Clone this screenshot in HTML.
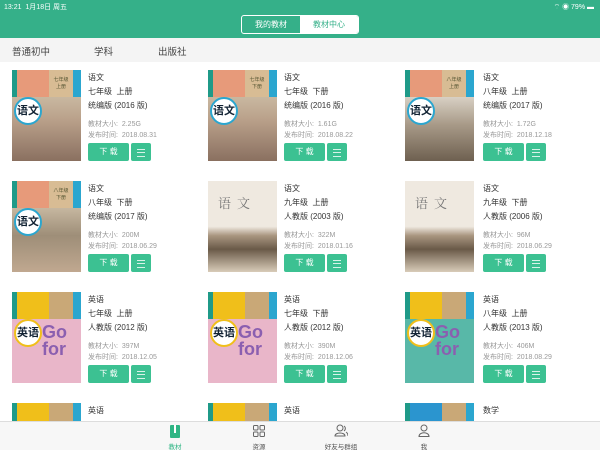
<!DOCTYPE html>
<html style="width:600px;height:450px;overflow:hidden"><head><meta charset="utf-8"><style>
*{margin:0;padding:0;box-sizing:border-box}
body{width:600px;height:450px;overflow:hidden;position:relative;background:#fff;font-family:"Liberation Sans","Noto Sans CJK SC",sans-serif;color:#333}
.hdr{position:absolute;left:0;top:0;width:600px;height:38px;background:#35b089}
.sb{position:absolute;top:2px;font-size:7px;color:#fff}
.seg{position:absolute;left:241px;top:15px;width:118px;height:19px;border:1px solid #fff;border-radius:3px;display:flex;font-size:8px;overflow:hidden}
.seg div{flex:1;text-align:center;line-height:17px;color:#fff}
.seg .on{background:#fff;color:#35b089}
.flt{position:absolute;top:38px;left:0;width:600px;height:24px;background:#f4f4f4;font-size:9.5px;color:#444}
.flt span{position:absolute;top:6px}
.cv{position:absolute;width:69px;height:91px;overflow:hidden}
.t{position:absolute;font-size:8px;color:#333;line-height:10px;white-space:nowrap}
.s{position:absolute;font-size:7px;color:#999;line-height:10px;white-space:nowrap}
.dl{position:absolute;width:41px;height:18px;background:#3cc192;color:#fff;font-size:8px;text-align:center;line-height:18px;border-radius:2px}
.ls{position:absolute;width:20px;height:18px;background:#3cc192;border-radius:2px}
.ls:after{content:"";position:absolute;left:6px;top:6px;width:8px;height:6px;border-top:1px solid #d8f2e8;border-bottom:1px solid #d8f2e8}
.ls:before{content:"";position:absolute;left:6px;top:9px;width:8px;height:1px;background:#d8f2e8}
.tab{position:absolute;left:0;top:421px;width:600px;height:29px;background:#f7f7f7;border-top:1px solid #ddd;z-index:5}
.ti{position:absolute;top:19px;font-size:6.5px;color:#555;transform:translateX(-50%)}
.ca{background:linear-gradient(#0000 0 27px,#c9b8a0 27px,#b9a08a 55%,#8a7060)}
.ca .a1{position:absolute;left:0;top:0;width:5px;height:27px;background:#1f9a88}
.ca .a2{position:absolute;left:5px;top:0;width:32px;height:27px;background:#e79a7a}
.ca .a3{position:absolute;left:37px;top:0;width:24px;height:27px;background:#d8bc94;font-size:5px;text-align:center;padding-top:6px;color:#553}
.ca .a4{position:absolute;left:61px;top:0;width:8px;height:27px;background:#2ba6cf}
.circ{position:absolute;left:2px;top:27px;width:28px;height:28px;border-radius:50%;background:#fff;border:2px solid #2ba6cf;font-size:11px;font-weight:bold;text-align:center;line-height:24px;color:#123}
.cb{background:linear-gradient(#efe9e0 0 50%,#a99680 60%,#6a5a48 75%,#d8cbb8 100%)}
.cb .b1{position:absolute;left:10px;top:12px;font-size:13px;color:#777;letter-spacing:6px;font-family:"Noto Serif CJK SC",serif}
.cc{background:#e9b6c9}
.cc .a1{background:#1f9a88}.cc .a2{background:#f0bf1a}.cc .a3{background:#c9a877}.cc .a4{background:#2ba6cf}
.cc .a1,.cc .a2,.cc .a3,.cc .a4{position:absolute;top:0;height:27px}
.cd .a2{background:#2b95cf}
.go{position:absolute;left:30px;top:32px;font-size:18px;font-weight:bold;color:#8b5fb0;line-height:17px}
.r4{height:18px}
</style></head><body>
<div class="hdr">
<div class="sb" style="left:4px">13:21&nbsp; 1月18日 周五</div>
<div class="sb" style="right:6px">⌔ ◉ 79% ▬</div>
<div class="seg"><div>我的教材</div><div class="on">教材中心</div></div>
</div>
<div class="flt"><span style="left:12px">普通初中</span><span style="left:94px">学科</span><span style="left:158px">出版社</span></div>

<div class="cv ca" style="left:12px;top:70px"><div class="a1"></div><div class="a2"></div><div class="a3">七年级<br>上册</div><div class="a4"></div><div class="circ">语文</div></div>
<div class="cv ca" style="left:208px;top:70px"><div class="a1"></div><div class="a2"></div><div class="a3">七年级<br>下册</div><div class="a4"></div><div class="circ">语文</div></div>
<div class="cv ca" style="left:405px;top:70px;background:linear-gradient(#0000 0 27px,#d8d0c4 27px,#a89a88 60%,#6e6050)"><div class="a1"></div><div class="a2"></div><div class="a3">八年级<br>上册</div><div class="a4"></div><div class="circ">语文</div></div>
<div class="cv ca" style="left:12px;top:181px;background:linear-gradient(#0000 0 27px,#c6b7a0 27px,#9e8e78 60%,#c0a890)"><div class="a1"></div><div class="a2"></div><div class="a3">八年级<br>下册</div><div class="a4"></div><div class="circ">语文</div></div>
<div class="cv cb" style="left:208px;top:181px"><div class="b1">语文</div></div>
<div class="cv cb" style="left:405px;top:181px"><div class="b1">语文</div></div>
<div class="cv cc" style="left:12px;top:292px"><div class="a1" style="left:0;width:5px"></div><div class="a2" style="left:5px;width:32px"></div><div class="a3" style="left:37px;width:24px"></div><div class="a4" style="left:61px;width:8px"></div><div class="circ" style="border-color:#f0bf1a">英语</div><div class="go">Go<br>for</div></div>
<div class="cv cc" style="left:208px;top:292px"><div class="a1" style="left:0;width:5px"></div><div class="a2" style="left:5px;width:32px"></div><div class="a3" style="left:37px;width:24px"></div><div class="a4" style="left:61px;width:8px"></div><div class="circ" style="border-color:#f0bf1a">英语</div><div class="go">Go<br>for</div></div>
<div class="cv cc" style="left:405px;top:292px;background:#58b8a8"><div class="a1" style="left:0;width:5px"></div><div class="a2" style="left:5px;width:32px"></div><div class="a3" style="left:37px;width:24px"></div><div class="a4" style="left:61px;width:8px"></div><div class="circ" style="border-color:#f0bf1a">英语</div><div class="go">Go<br>for</div></div>
<div class="cv cc r4" style="left:12px;top:403px"><div class="a1" style="left:0;width:5px"></div><div class="a2" style="left:5px;width:32px"></div><div class="a3" style="left:37px;width:24px"></div><div class="a4" style="left:61px;width:8px"></div></div>
<div class="cv cc r4" style="left:208px;top:403px"><div class="a1" style="left:0;width:5px"></div><div class="a2" style="left:5px;width:32px"></div><div class="a3" style="left:37px;width:24px"></div><div class="a4" style="left:61px;width:8px"></div></div>
<div class="cv cc cd r4" style="left:405px;top:403px"><div class="a1" style="left:0;width:5px"></div><div class="a2" style="left:5px;width:32px"></div><div class="a3" style="left:37px;width:24px"></div><div class="a4" style="left:61px;width:8px"></div></div>

<div class="t" style="left:88px;top:73px">语文</div><div class="t" style="left:88px;top:87px">七年级&nbsp; 上册</div><div class="t" style="left:88px;top:101px">统编版 (2016 版)</div>
<div class="s" style="left:88px;top:120px">教材大小:&nbsp; 2.25G</div><div class="s" style="left:88px;top:131px">发布时间:&nbsp; 2018.08.31</div>
<div class="dl" style="left:88px;top:143px">下 载</div><div class="ls" style="left:131px;top:143px"></div>
<div class="t" style="left:284px;top:73px">语文</div><div class="t" style="left:284px;top:87px">七年级&nbsp; 下册</div><div class="t" style="left:284px;top:101px">统编版 (2016 版)</div>
<div class="s" style="left:284px;top:120px">教材大小:&nbsp; 1.61G</div><div class="s" style="left:284px;top:131px">发布时间:&nbsp; 2018.08.22</div>
<div class="dl" style="left:284px;top:143px">下 载</div><div class="ls" style="left:327px;top:143px"></div>
<div class="t" style="left:483px;top:73px">语文</div><div class="t" style="left:483px;top:87px">八年级&nbsp; 上册</div><div class="t" style="left:483px;top:101px">统编版 (2017 版)</div>
<div class="s" style="left:483px;top:120px">教材大小:&nbsp; 1.72G</div><div class="s" style="left:483px;top:131px">发布时间:&nbsp; 2018.12.18</div>
<div class="dl" style="left:483px;top:143px">下 载</div><div class="ls" style="left:526px;top:143px"></div>
<div class="t" style="left:88px;top:184px">语文</div><div class="t" style="left:88px;top:198px">八年级&nbsp; 下册</div><div class="t" style="left:88px;top:212px">统编版 (2017 版)</div>
<div class="s" style="left:88px;top:231px">教材大小:&nbsp; 200M</div><div class="s" style="left:88px;top:242px">发布时间:&nbsp; 2018.06.29</div>
<div class="dl" style="left:88px;top:254px">下 载</div><div class="ls" style="left:131px;top:254px"></div>
<div class="t" style="left:284px;top:184px">语文</div><div class="t" style="left:284px;top:198px">九年级&nbsp; 上册</div><div class="t" style="left:284px;top:212px">人教版 (2003 版)</div>
<div class="s" style="left:284px;top:231px">教材大小:&nbsp; 322M</div><div class="s" style="left:284px;top:242px">发布时间:&nbsp; 2018.01.16</div>
<div class="dl" style="left:284px;top:254px">下 载</div><div class="ls" style="left:327px;top:254px"></div>
<div class="t" style="left:483px;top:184px">语文</div><div class="t" style="left:483px;top:198px">九年级&nbsp; 下册</div><div class="t" style="left:483px;top:212px">人教版 (2006 版)</div>
<div class="s" style="left:483px;top:231px">教材大小:&nbsp; 96M</div><div class="s" style="left:483px;top:242px">发布时间:&nbsp; 2018.06.29</div>
<div class="dl" style="left:483px;top:254px">下 载</div><div class="ls" style="left:526px;top:254px"></div>
<div class="t" style="left:88px;top:295px">英语</div><div class="t" style="left:88px;top:309px">七年级&nbsp; 上册</div><div class="t" style="left:88px;top:323px">人教版 (2012 版)</div>
<div class="s" style="left:88px;top:342px">教材大小:&nbsp; 397M</div><div class="s" style="left:88px;top:353px">发布时间:&nbsp; 2018.12.05</div>
<div class="dl" style="left:88px;top:365px">下 载</div><div class="ls" style="left:131px;top:365px"></div>
<div class="t" style="left:284px;top:295px">英语</div><div class="t" style="left:284px;top:309px">七年级&nbsp; 下册</div><div class="t" style="left:284px;top:323px">人教版 (2012 版)</div>
<div class="s" style="left:284px;top:342px">教材大小:&nbsp; 390M</div><div class="s" style="left:284px;top:353px">发布时间:&nbsp; 2018.12.06</div>
<div class="dl" style="left:284px;top:365px">下 载</div><div class="ls" style="left:327px;top:365px"></div>
<div class="t" style="left:483px;top:295px">英语</div><div class="t" style="left:483px;top:309px">八年级&nbsp; 上册</div><div class="t" style="left:483px;top:323px">人教版 (2013 版)</div>
<div class="s" style="left:483px;top:342px">教材大小:&nbsp; 406M</div><div class="s" style="left:483px;top:353px">发布时间:&nbsp; 2018.08.29</div>
<div class="dl" style="left:483px;top:365px">下 载</div><div class="ls" style="left:526px;top:365px"></div>
<div class="t" style="left:88px;top:406px">英语</div>
<div class="t" style="left:284px;top:406px">英语</div>
<div class="t" style="left:483px;top:406px">数学</div>

<div class="tab">
<svg style="position:absolute;left:170px;top:3px" width="10" height="13"><rect x="0" y="0" width="10" height="13" rx="1" fill="#2fb584"/><rect x="4" y="0" width="2" height="8" fill="#fff"/></svg>
<svg style="position:absolute;left:253px;top:3px" width="12" height="12" fill="none" stroke="#666" stroke-width="1"><rect x="0.5" y="0.5" width="4.5" height="4.5" rx="1"/><rect x="7" y="0.5" width="4.5" height="4.5" rx="1"/><rect x="0.5" y="7" width="4.5" height="4.5" rx="1"/><rect x="7" y="7" width="4.5" height="4.5" rx="1"/></svg>
<svg style="position:absolute;left:334px;top:2px" width="14" height="13" fill="none" stroke="#666" stroke-width="1"><circle cx="6" cy="4" r="3"/><path d="M1 12c0-4 10-4 10 0z"/><path d="M10 2a3 3 0 0 1 0 5M12 8c1.5 1 2 2 2 4"/></svg>
<svg style="position:absolute;left:418px;top:2px" width="12" height="13" fill="none" stroke="#666" stroke-width="1"><circle cx="6" cy="4" r="3"/><path d="M1 12.5c0-5 10-5 10 0z"/></svg>
<div class="ti" style="left:175px;color:#2fb584">教材</div>
<div class="ti" style="left:259px">资源</div>
<div class="ti" style="left:341px">好友与群组</div>
<div class="ti" style="left:424px">我</div>
</div>
</body></html>
